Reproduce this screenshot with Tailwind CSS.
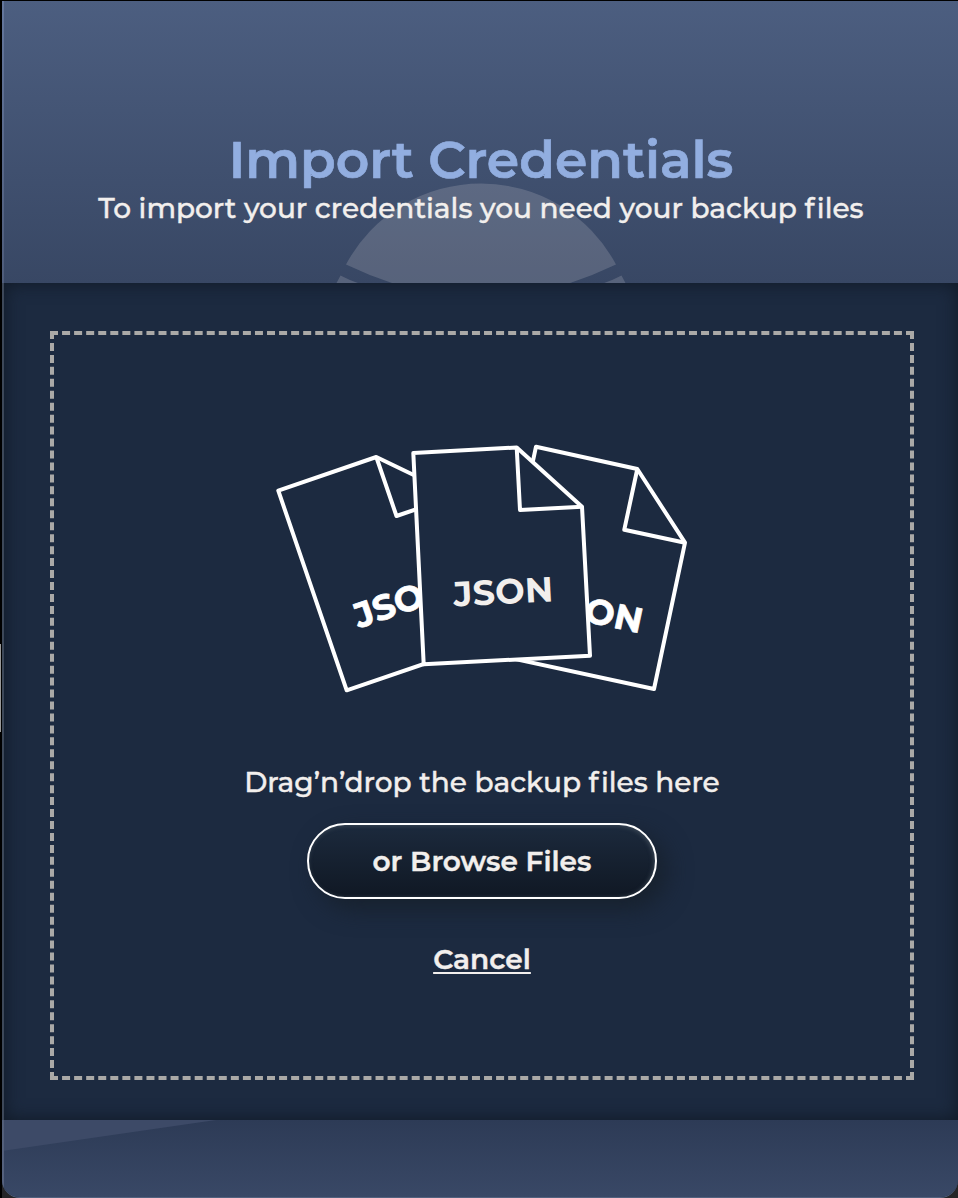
<!DOCTYPE html>
<html lang="en">
<head>
<meta charset="utf-8">
<title>Import Credentials</title>
<script src="https://cdn.jsdelivr.net/npm/@tailwindcss/browser@4"></script>
</head>
<body class="h-[1198px] w-[958px] overflow-hidden bg-[#19191b] font-['Montserrat','Inter',sans-serif] text-[#f2efed] [-webkit-text-stroke-width:0.4px]">
<div class="relative h-[1198px] border-l-2 border-black bg-[linear-gradient(#000_0_1140px,#252528_1180px)] pt-px">
  <div class="absolute -left-0.5 top-[644px] h-[88px] w-px bg-[#999]"></div>
  <div class="relative flex h-[1197px] flex-col overflow-hidden rounded-b-[18px] border-b border-b-[#52617e] bg-[#1c2a40] pl-0.5">
    <div class="absolute inset-y-0 left-0 z-10 w-0.5 bg-[linear-gradient(#64779d_0,#4e5c7a_282px,#3d4859_282px,#3d4859_1119px,#535f79_1119px,#55627f_100%)]"></div>
    <header class="relative flex h-[282px] shrink-0 flex-col items-center bg-linear-to-b from-[#4c5e80] to-[#384764] pt-[128px]">
      <svg class="absolute left-0 top-0" width="954" height="282" viewBox="4 1 954 282" fill="#f2efed" fill-opacity=".17">
        <path d="M346 264.500A153 153 0 0 1 616 264.500Q592 276 567 284H395Q370 276 346 264.500Z"/>
        <path d="M340.500 275.500L336 284H361Q351 281 340.500 275.500ZM621.500 275.500L626 284H601Q611 281 621.500 275.500Z"/>
      </svg>
      <h1 class="relative whitespace-nowrap text-[52px] font-semibold leading-[62px] text-[#92aee0] [-webkit-text-stroke-width:0.7px]">Import Credentials</h1>
      <p class="relative whitespace-nowrap text-[28px] font-medium leading-[34px]">To import your credentials you need your backup <span class="tracking-[2.5px]">f</span>iles</p>
    </header>
    <main class="h-[837px] shrink-0 pl-[46px] pr-[44px] pt-12 shadow-[inset_0_0_18px_#101925]">
      <section class="flex h-[749px] flex-col items-center border-4 border-dashed border-[#aaa9a7] pt-[95px]">
        <svg width="440" height="280" viewBox="262 430 440 280" fill="#1c2a40" stroke="#fff" stroke-width="4" stroke-linejoin="round" class="font-bold">
          <path d="M278.300 490.700L376.300 457L449 492L494 640L346.700 690.300Z"/>
          <path d="M376.300 457L396.500 516L449 498" fill="none"/>
          <text transform="translate(359 628.500) rotate(-18.900)" font-size="35" textLength="100" fill="#fff" stroke="#fff" stroke-width=".7">JSON</text>
          <path d="M536 446.700L637.300 469L685 542.700L654 689L492 654Z"/>
          <path d="M637.300 469L624.300 529.700L685 542.700" fill="none"/>
          <text transform="translate(542 612.500) rotate(12)" font-size="35" textLength="100" fill="#fff" stroke="#fff" stroke-width=".7">JSON</text>
          <path d="M413.300 453L516.700 447.500L582 506.700L590 655.700L423.700 664.300Z"/>
          <path d="M516.700 447.500L520 510L582 506.700" fill="none"/>
          <text transform="translate(454 606.500) rotate(-3)" font-size="35" textLength="100" fill="#f2efed" stroke="none">JSON</text>
        </svg>
        <p class="mt-[55px] whitespace-nowrap text-[28px] font-medium leading-[34px]">Drag’n’drop the backup <span class="tracking-[2.5px]">f</span>iles here</p>
        <button class="mt-[24px] h-[76px] w-[350px] rounded-[38px] border-2 border-white bg-linear-to-b from-[#1c2a3d] to-[#101824] text-[28px] font-semibold shadow-[10px_10px_24px_#17212d,inset_-1px_1px_4px_#3c4856]">or Browse Files</button>
        <a class="mt-[43px] whitespace-nowrap text-[28px] font-semibold leading-[34px] underline decoration-2 underline-offset-[3px]">Cancel</a>
      </section>
    </main>
    <footer class="-ml-0.5 min-h-0 flex-1 bg-linear-to-b from-[#2d3b56] to-[#394866]">
      <div class="h-[31px] w-[214px] bg-[#3d4a67] [clip-path:polygon(0_0,100%_0,0_100%)]"></div>
    </footer>
  </div>
</div>
</body>
</html>
